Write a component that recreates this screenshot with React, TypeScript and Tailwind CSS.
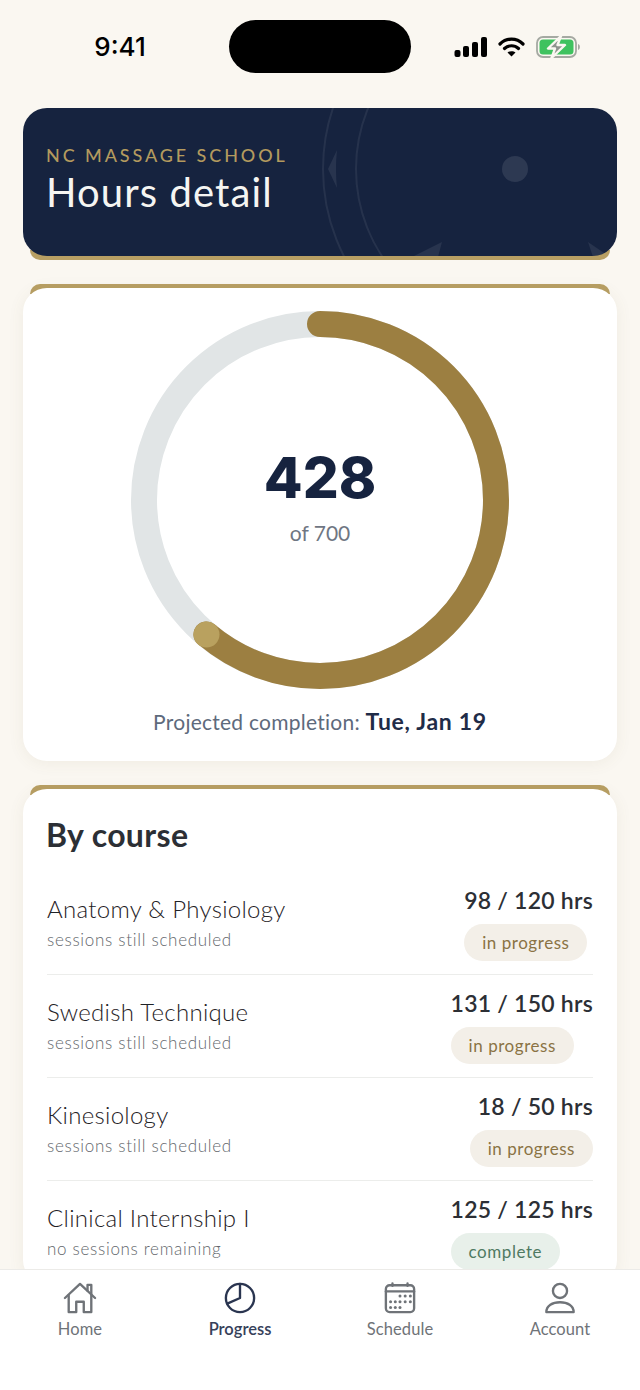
import React from 'react';

const courses = [
  { name: 'Anatomy & Physiology', note: 'sessions still scheduled', hours: '98 / 120 hrs', status: 'in progress' },
  { name: 'Swedish Technique', note: 'sessions still scheduled', hours: '131 / 150 hrs', status: 'in progress' },
  { name: 'Kinesiology', note: 'sessions still scheduled', hours: '18 / 50 hrs', status: 'in progress' },
  { name: 'Clinical Internship I', note: 'no sessions remaining', hours: '125 / 125 hrs', status: 'complete' },
];

function StatusIcons() {
  return (
    <div className="flex items-center gap-[11px]">
      <svg width="33" height="20" viewBox="0 0 33 20" fill="#000">
        <rect x="0.5" y="13" width="6" height="7" rx="2" />
        <rect x="9" y="9" width="6" height="11" rx="2" />
        <rect x="18" y="5" width="6" height="15" rx="2" />
        <rect x="27" y="0" width="6" height="20" rx="2" />
      </svg>
      <svg width="27" height="20" viewBox="0 0 27 20" fill="none" stroke="#000" strokeWidth="3.2" strokeLinecap="round">
        <path d="M2 7 C8.5 0.5 18.5 0.5 25 7" />
        <path d="M6.5 11.5 C10.5 7.8 16.5 7.8 20.5 11.5" />
        <path d="M13.5 19.5 L9.5 15.5 C11.5 13.7 15.5 13.7 17.5 15.5 Z" fill="#000" stroke="none" />
      </svg>
      <svg width="46" height="22" viewBox="0 0 46 22">
        <rect x="1" y="1" width="39" height="20" rx="6" fill="none" stroke="#a5a9a2" strokeWidth="1.8" />
        <rect x="3.5" y="3.5" width="34" height="15" rx="3.5" fill="#3fc25f" />
        <path d="M42 8 C44.5 8.5 44.5 13.5 42 14 Z" fill="#a5a9a2" />
        <path d="M25 0 L12 12.5 H19 L15.5 22 L29 9 H21.5 Z" fill="#8f938e" stroke="#faf7f1" strokeWidth="2.4" strokeLinejoin="round" />
      </svg>
    </div>
  );
}

function HeaderArt() {
  return (
    <svg className="absolute inset-0" width="594" height="148" viewBox="23 108 594 148" fill="none">
      <circle cx="515" cy="169" r="192" stroke="#ffffff" strokeOpacity="0.07" strokeWidth="2" />
      <circle cx="515" cy="169" r="159" stroke="#ffffff" strokeOpacity="0.07" strokeWidth="2" />
      <circle cx="515" cy="169" r="13" fill="#ffffff" fillOpacity="0.1" />
      <path d="M328 169 L337 150 Q335 169 337 188 Z" fill="#ffffff" fillOpacity="0.08" />
      <path d="M442 242 L412 257 H438 Z" fill="#ffffff" fillOpacity="0.08" />
      <path d="M588 242 L610 257 H593 Z" fill="#ffffff" fillOpacity="0.08" />
    </svg>
  );
}

function HoursRing() {
  const r = 176;
  const circumference = 2 * Math.PI * r;
  const done = (428 / 700) * circumference;
  return (
    <svg width="378" height="378" viewBox="0 0 378 378" fill="none">
      <circle cx="189" cy="189" r={r} stroke="#e1e5e6" strokeWidth="26" />
      <circle
        cx="189"
        cy="189"
        r={r}
        stroke="#9c7f41"
        strokeWidth="26"
        strokeLinecap="round"
        strokeDasharray={`${done} ${circumference}`}
        transform="rotate(-90 189 189)"
      />
      <circle cx="75.5" cy="323.5" r="13" fill="#b9a15f" />
    </svg>
  );
}

function CourseRow({ course, last }: { course: (typeof courses)[number]; last: boolean }) {
  const complete = course.status === 'complete';
  return (
    <div className={`flex h-[103px] items-start justify-between pt-[11px] ${last ? '' : 'border-b border-[#ecedeb]'}`}>
      <div className="pt-[9px]">
        <div className="text-[24px] leading-[34px] font-light tracking-[0.3px] text-[#1f2226]">{course.name}</div>
        <div className="mt-[2px] text-[17px] leading-[24px] font-light tracking-[0.7px] text-[#63676c]">{course.note}</div>
      </div>
      <div className="flex flex-col items-start">
        <div className="w-full text-right text-[23px] leading-[34px] font-semibold tracking-[0.25px] text-[#2c2f35]">{course.hours}</div>
        <div
          className={`mt-[7px] flex h-[37px] items-center rounded-full px-[18px] text-[17px] tracking-[0.55px] ${
            complete ? 'bg-[#e8f0ea] text-[#4f7a62]' : 'bg-[#f3efe8] text-[#8a7344]'
          }`}
        >
          {course.status}
        </div>
      </div>
    </div>
  );
}

function TabItem({ label, active, children }: { label: string; active?: boolean; children: React.ReactNode }) {
  return (
    <div className="flex flex-col items-center">
      <div className="flex h-[32px] items-center">{children}</div>
      <span className={`mt-[3px] text-[16.5px] leading-[24px] ${active ? 'font-semibold text-[#36415a]' : 'tracking-[0.1px] text-[#6f7378]'}`}>
        {label}
      </span>
    </div>
  );
}

export default function App() {
  return (
    <div className="flex h-[1390px] w-[640px] flex-col overflow-hidden bg-[#faf7f1] font-['Lato','Liberation_Sans',sans-serif]">
      <div className="flex h-[108px] shrink-0 items-start pt-[20px]">
        <div className="flex h-[53px] w-[229px] items-center justify-center pl-[11px] font-['Inter',sans-serif] text-[26px] font-medium text-black">
          9:41
        </div>
        <div className="h-[53px] w-[182px] rounded-full bg-black" />
        <div className="flex h-[53px] flex-1 items-center pl-[43px]">
          <StatusIcons />
        </div>
      </div>

      <div className="flex min-h-0 flex-1 flex-col gap-[24px] overflow-hidden px-[23px]">
        {/* Header */}
        <div className="shrink-0">
          <div className="relative z-10 h-[148px] overflow-hidden rounded-[24px] bg-[#16233f] pt-[36px] pl-[23px]">
            <HeaderArt />
            <div className="relative text-[18px] leading-[22px] font-medium tracking-[2.9px] text-[#b39a5e]">NC MASSAGE SCHOOL</div>
            <div className="relative mt-[1px] text-[40px] leading-[50px] tracking-[1.1px] text-[#f5f5f2]">Hours detail</div>
          </div>
          <div className="mx-[7px] -mt-[6px] h-[10px] rounded-b-[10px] bg-[#b89f63]" />
        </div>

        {/* Ring */}
        <div className="shrink-0">
          <div className="mx-[7px] -mb-[6px] h-[10px] rounded-t-[10px] bg-[#b89f63]" />
          <div className="relative flex h-[473px] flex-col items-center rounded-[24px] bg-white pt-[23px] shadow-[0_2px_16px_rgba(120,100,60,0.08)]">
            <div className="relative h-[378px] w-[378px]">
              <HoursRing />
              <div className="absolute inset-0 flex flex-col items-center justify-center pb-[7px]">
                <div className="font-['Inter',sans-serif] text-[56.5px] leading-[64px] font-extrabold text-[#16233f]">428</div>
                <div className="mt-[9px] text-[21px] leading-[28px] text-[#6f7683]">of 700</div>
              </div>
            </div>
            <div className="mt-[17px] text-[21px] leading-[30px] tracking-[0.25px] text-[#5e6a7c]">
              Projected completion: <span className="text-[23px] font-bold tracking-[0.7px] text-[#1f2c48]">Tue, Jan 19</span>
            </div>
          </div>
        </div>

        {/* By course */}
        <div className="shrink-0">
          <div className="mx-[7px] -mb-[6px] h-[10px] rounded-t-[10px] bg-[#b89f63]" />
          <div className="relative rounded-[24px] bg-white px-[24px] pt-[25px] shadow-[0_2px_16px_rgba(120,100,60,0.08)]">
            <h2 className="-ml-px text-[32px] leading-[42px] font-bold tracking-[0.35px] text-[#2c2f35]">By course</h2>
            <div className="mt-[16px]">
              {courses.map((course, i) => (
                <CourseRow key={course.name} course={course} last={i === courses.length - 1} />
              ))}
            </div>
          </div>
        </div>
      </div>

      {/* Tab bar */}
      <div className="relative z-10 grid h-[121px] shrink-0 grid-cols-4 border-t border-[#ecebe8] bg-white pt-[12px]">
        <TabItem label="Home">
          <svg width="34" height="32" viewBox="0 0 36 34" fill="none" stroke="#6f7378" strokeWidth="2.5" strokeLinecap="round" strokeLinejoin="round">
            <path d="M2 17 L18 2 L34 17" />
            <path d="M26 9 V3 H30 V13" />
            <path d="M6 14 V32 H14 V21 H22 V32 H30 V14" />
          </svg>
        </TabItem>
        <TabItem label="Progress" active>
          <svg width="32" height="32" viewBox="0 0 34 34" fill="none" stroke="#2a3550" strokeWidth="2.5" strokeLinecap="round" strokeLinejoin="round">
            <circle cx="17" cy="17" r="15" />
            <path d="M17 2 V17 L3.5 23" />
          </svg>
        </TabItem>
        <TabItem label="Schedule">
          <svg width="32" height="32" viewBox="0 0 34 34" fill="none" stroke="#6f7378" strokeWidth="2.5" strokeLinecap="round">
            <rect x="2" y="3.5" width="30" height="28.5" rx="4" />
            <path d="M2 10 H32" />
            <path d="M9 1.5 V4 M25 1.5 V4" />
            <g fill="#6f7378" stroke="none">
              <circle cx="17" cy="15" r="1.6" /><circle cx="22.5" cy="15" r="1.6" /><circle cx="28" cy="15" r="1.6" />
              <circle cx="7" cy="21" r="1.6" /><circle cx="12" cy="21" r="1.6" /><circle cx="17" cy="21" r="1.6" /><circle cx="22.5" cy="21" r="1.6" /><circle cx="28" cy="21" r="1.6" />
              <circle cx="7" cy="27" r="1.6" /><circle cx="12" cy="27" r="1.6" /><circle cx="17" cy="27" r="1.6" />
            </g>
          </svg>
        </TabItem>
        <TabItem label="Account">
          <svg width="32" height="32" viewBox="0 0 34 34" fill="none" stroke="#6f7378" strokeWidth="2.5" strokeLinejoin="round">
            <circle cx="17" cy="9.5" r="7.5" />
            <path d="M2.5 32 C2.5 25 9 21.5 17 21.5 C25 21.5 31.5 25 31.5 32 Z" />
          </svg>
        </TabItem>
      </div>
    </div>
  );
}
